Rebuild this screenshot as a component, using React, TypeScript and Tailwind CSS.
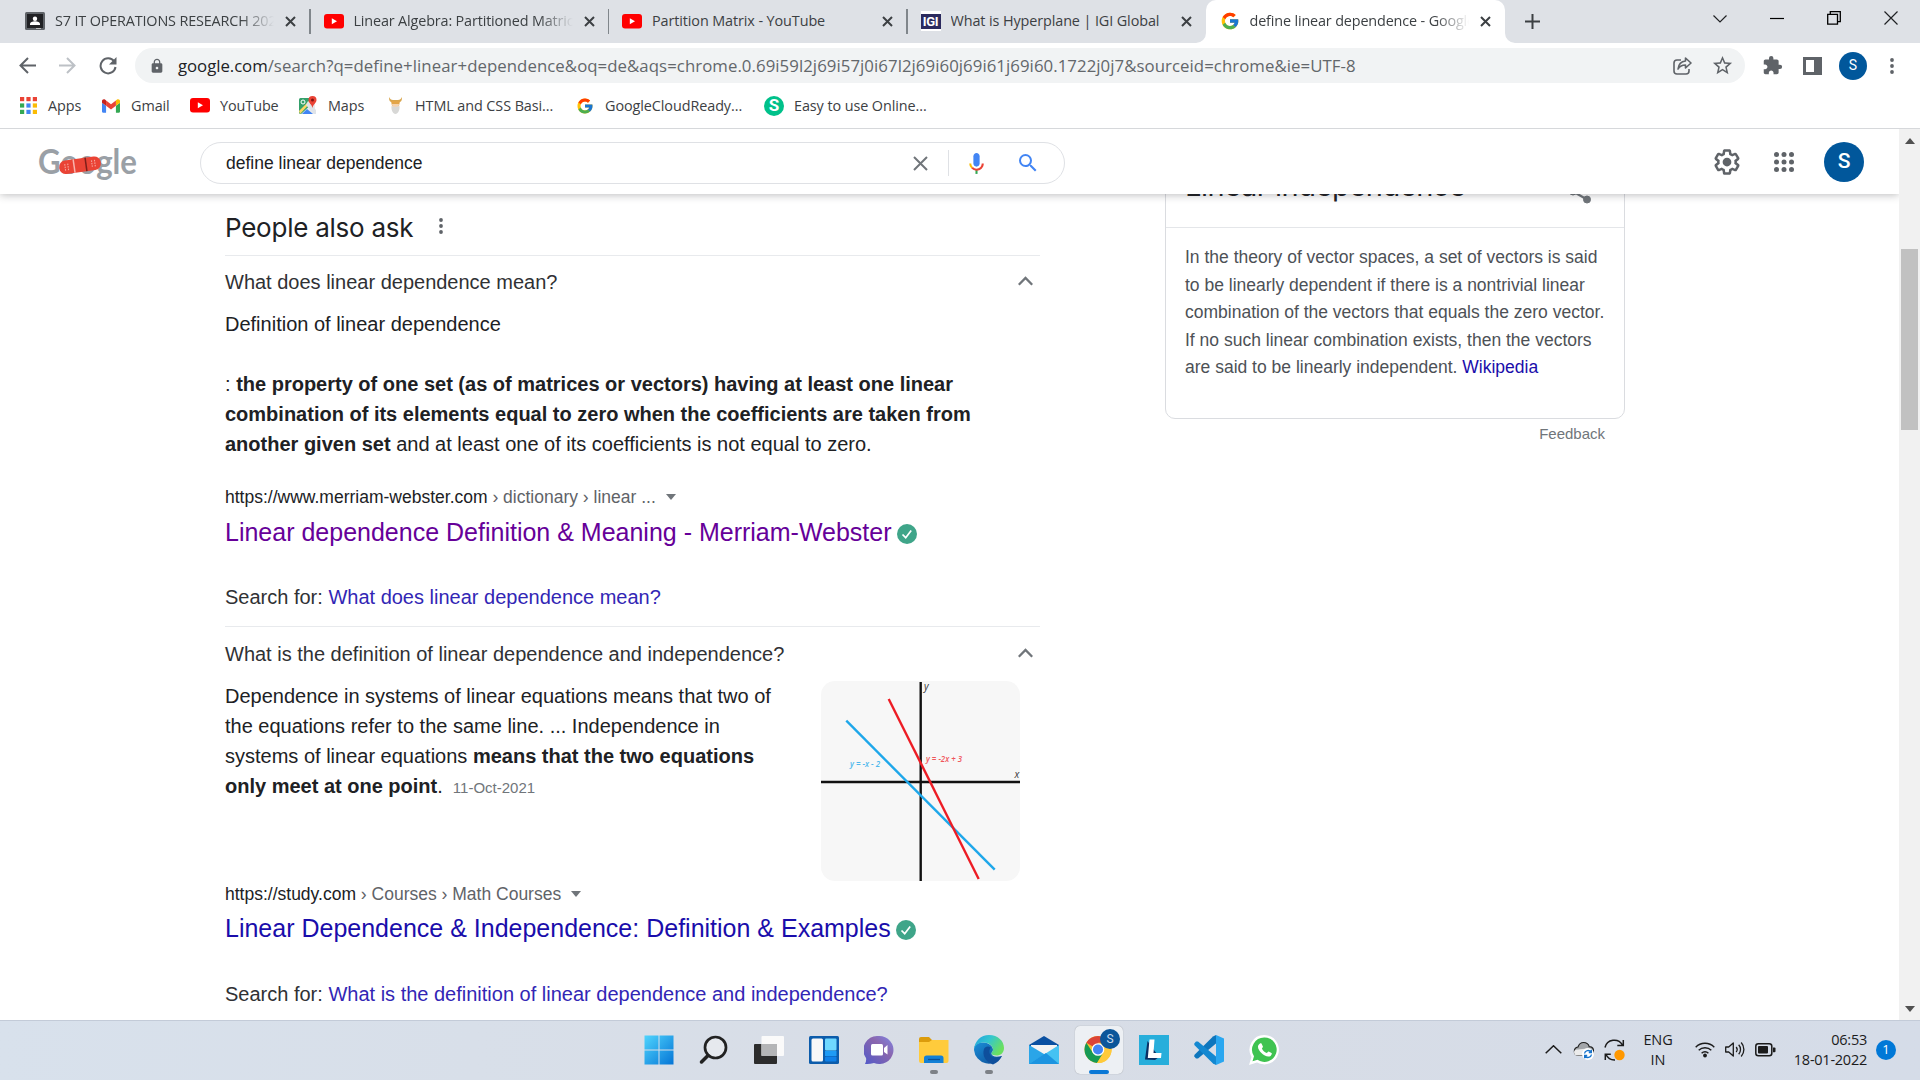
import type { ReactNode } from "react";
import { FcGoogle } from "react-icons/fc";
import { MdExtension, MdLock, MdStarBorder } from "react-icons/md";

const UI = "font-['Open_Sans','Noto_Sans',sans-serif]";
const ARIAL = "font-['Liberation_Sans',Arial,sans-serif]";

/* ---------- small icons ---------- */

function YouTubeIcon() {
  return (
    <svg className="h-[15px] w-5 shrink-0" viewBox="0 0 20 15">
      <rect width="20" height="14.5" rx="3" fill="#f00" />
      <path d="M7.8 4.2v6l5.2-3z" fill="#fff" />
    </svg>
  );
}

function ClassroomIcon() {
  return (
    <svg className="h-[18px] w-5 shrink-0" viewBox="0 0 20 18">
      <rect width="20" height="18" rx="1.5" fill="#5f6368" />
      <rect x="2" y="2" width="16" height="14" fill="#202124" />
      <circle cx="10" cy="6.8" r="2.2" fill="#fff" />
      <path d="M5 13v-1.2c0-1.6 2.4-2.5 5-2.5s5 .9 5 2.5V13z" fill="#fff" />
      <path d="M11 16h5v1h-5z" fill="#bbb" />
    </svg>
  );
}

function IgiIcon() {
  return (
    <span className="flex h-5 w-5 shrink-0 items-center bg-white">
      <span className="flex h-[15px] w-5 items-center justify-center bg-[#2b2a5e] font-['Roboto',sans-serif] text-[13px] font-bold leading-none tracking-tight text-white">
        IGI
      </span>
    </span>
  );
}

function CloseIcon() {
  return (
    <svg className="h-[11px] w-[11px] shrink-0" viewBox="0 0 11 11" stroke="#3c4043" strokeWidth="2">
      <path d="M1 1l9 9M10 1l-9 9" />
    </svg>
  );
}

function GmailIcon() {
  return (
    <svg className="h-[14px] w-[18px]" viewBox="52 42 88 66">
      <path fill="#4285f4" d="M58 108h14V74L52 59v43c0 3.32 2.69 6 6 6" />
      <path fill="#34a853" d="M120 108h14c3.32 0 6-2.69 6-6V59l-20 15" />
      <path fill="#fbbc04" d="M120 48v26l20-15v-8c0-7.42-8.47-11.65-14.4-7.2" />
      <path fill="#ea4335" d="M72 74V48l24 18 24-18v26L96 92" />
      <path fill="#c5221f" d="M52 51v8l20 15V48l-5.6-4.2c-5.94-4.45-14.4-.22-14.4 7.2" />
    </svg>
  );
}

function MapsIcon() {
  return (
    <svg className="h-[19px] w-[19px]" viewBox="0 0 19 19">
      <rect x="0" y="2" width="16" height="16" rx="1.5" fill="#34a06a" />
      <path d="M2 18L16 5v13z" fill="#e8eaed" />
      <path d="M3 18l5-5 6 5z" fill="#4285f4" />
      <path d="M0 15L12 3l2 1L1 18z" fill="#fdd663" />
      <path d="M9 5l8 9v4h-2L7 9z" fill="#dfe3e8" />
      <circle cx="4" cy="6" r="2" fill="none" stroke="#fff" strokeWidth="1" />
      <path d="M13.5 0a4 4 0 0 0-4 4c0 3 3.3 4 4 8 .7-4 4-5 4-8a4 4 0 0 0-4-4z" fill="#ea4335" />
      <circle cx="13.5" cy="4" r="1.5" fill="#811411" />
    </svg>
  );
}

function VikingIcon() {
  return (
    <svg className="h-[19px] w-[15px]" viewBox="0 0 15 19">
      <path d="M1 1c0 4 1 5 3 5l7 0c2 0 3-1 3-5-1 2-2 3-4 3H5C3 4 2 3 1 1z" fill="#d9a54c" />
      <path d="M3 5h9l-1 5H4z" fill="#e3a548" />
      <path d="M4 8h7l-.5 4h-6z" fill="#f3d2b0" />
      <path d="M3.5 10l4 1 4-1c.5 4-1.5 8-4 8s-4.5-4-4-8z" fill="#d8d8d6" />
    </svg>
  );
}

function AppsIcon() {
  const colors = ["#ea4335", "#ea4335", "#ea4335", "#34a853", "#4285f4", "#fbbc04", "#34a853", "#4285f4", "#fbbc04"];
  return (
    <svg className="h-[17px] w-[17px]" viewBox="0 0 17 17">
      {colors.map((c, i) => (
        <rect key={i} x={(i % 3) * 6.4} y={Math.floor(i / 3) * 6.4} width="4.2" height="4.2" fill={c} />
      ))}
    </svg>
  );
}

/* ---------- browser chrome ---------- */

function Tab({ icon, title, active, fade }: { icon: ReactNode; title: string; active?: boolean; fade?: boolean }) {
  return (
    <div
      className={
        active
          ? "relative flex h-[43px] w-[299px] shrink-0 items-center rounded-t-[10px] bg-white pb-px pl-[14px] pr-[14px]"
          : "relative flex h-[43px] w-[299px] shrink-0 items-center pb-px pl-[14px] pr-[14px]"
      }
    >
      {active && (
        <>
          <svg className="absolute -left-[10px] bottom-0 h-[10px] w-[10px]" viewBox="0 0 10 10">
            <path d="M10 0v10H0A10 10 0 0 0 10 0z" fill="#fff" />
          </svg>
          <svg className="absolute -right-[10px] bottom-0 h-[10px] w-[10px]" viewBox="0 0 10 10">
            <path d="M0 0v10h10A10 10 0 0 1 0 0z" fill="#fff" />
          </svg>
        </>
      )}
      {icon}
      <span
        className={
          fade
            ? "ml-[10px] w-[219px] overflow-hidden whitespace-nowrap pb-px text-[14.4px] tracking-[-0.15px] text-[#3c4043] [mask-image:linear-gradient(to_right,black_185px,transparent_219px)]"
            : "ml-[10px] w-[219px] overflow-hidden whitespace-nowrap pb-px text-[14.4px] tracking-[-0.1px] text-[#3c4043]"
        }
      >
        {title}
      </span>
      <span className="ml-auto flex">
        <CloseIcon />
      </span>
    </div>
  );
}

function TabStrip() {
  return (
    <div className="flex h-[43px] items-center bg-[#dee1e6]">
      <div className="w-[11px]" />
      <Tab icon={<ClassroomIcon />} title="S7 IT OPERATIONS RESEARCH 2021" fade />
      <div className="-mx-px h-[25px] w-[1.5px] bg-[#80868b]" />
      <Tab icon={<YouTubeIcon />} title="Linear Algebra: Partitioned Matrices" fade />
      <div className="-mx-px h-[25px] w-[1.5px] bg-[#80868b]" />
      <Tab icon={<YouTubeIcon />} title="Partition Matrix - YouTube" />
      <div className="-mx-px h-[25px] w-[1.5px] bg-[#80868b]" />
      <Tab icon={<IgiIcon />} title="What is Hyperplane | IGI Global" />
      <Tab icon={<FcGoogle className="h-5 w-5 shrink-0" />} title="define linear dependence - Google Search" active fade />
      <svg className="ml-[20px] h-[15px] w-[15px]" viewBox="0 0 15 15" stroke="#3c4043" strokeWidth="2">
        <path d="M7.5 0v15M0 7.5h15" />
      </svg>
      <div className="ml-auto flex h-full items-start gap-[43px] pr-[22px] pt-[11px]">
        <svg className="mt-[4px] h-2 w-[14px]" viewBox="0 0 14 8" fill="none" stroke="#202124" strokeWidth="1.2">
          <path d="M.5.5L7 7l6.5-6.5" />
        </svg>
        <svg className="h-[15px] w-[14px]" viewBox="0 0 14 15" stroke="#000" strokeWidth="1.2">
          <path d="M0 7.5h14" />
        </svg>
        <svg className="h-[14px] w-[14px]" viewBox="0 0 14 14" fill="none" stroke="#000" strokeWidth="1.3">
          <path d="M.7 3.3h9.8v9.8H.7zM3.3 3.300V.7h10v10h-2.800" />
        </svg>
        <svg className="h-[14px] w-[14px]" viewBox="0 0 14 14" stroke="#202124" strokeWidth="1.2">
          <path d="M.5.5l13 13M13.5.5l-13 13" />
        </svg>
      </div>
    </div>
  );
}

function Toolbar() {
  return (
    <div className="flex h-[45px] items-center bg-white pl-[19px] pr-[20px]">
      <svg className="h-[17px] w-[17px]" viewBox="0 0 17 17" fill="none" stroke="#5f6368" strokeWidth="2">
        <path d="M17 8.5H2M9 1L1.5 8.500 9 16" />
      </svg>
      <svg className="ml-[23px] h-[17px] w-[17px]" viewBox="0 0 17 17" fill="none" stroke="#bdc1c6" strokeWidth="2">
        <path d="M0 8.500h15M8 1l7.500 7.500L8 16" />
      </svg>
      <svg className="ml-[23px] h-[18px] w-[18px]" viewBox="0 0 18 18" fill="none" stroke="#5f6368" strokeWidth="2">
        <path d="M15.200 4.500A7.500 7.500 0 1 0 16.500 10" />
        <path d="M17.500 0v7.500H10z" fill="#5f6368" stroke="none" />
      </svg>
      <div className="ml-[18px] flex h-[35px] w-[1610px] items-center rounded-full bg-[#f1f3f4] pl-[14px] pr-[11px]">
        <MdLock className="h-4 w-4 text-[#5f6368]" />
        <span className="ml-[13px] whitespace-nowrap text-[16.8px] tracking-[0.06px] text-[#63676b]">
          <span className="tracking-[-0.05px] text-[#202124]">google.com</span>
          /search?q=define+linear+dependence&amp;oq=de&amp;aqs=chrome.0.69i59l2j69i57j0i67l2j69i60j69i61j69i60.1722j0j7&amp;sourceid=chrome&amp;ie=UTF-8
        </span>
        <svg className="ml-auto h-[18px] w-[19px]" viewBox="0 0 19 18" fill="none" stroke="#5f6368" strokeWidth="1.6" strokeLinejoin="round">
          <path d="M8 3H4a3 3 0 0 0-3 3v8a3 3 0 0 0 3 3h9a3 3 0 0 0 3-3v-2" />
          <path d="M12.5 1L18 6l-5.5 5V8c-4 0-6 1.5-7.5 4 .5-4.500 3-7.500 7.500-8z" />
        </svg>
        <MdStarBorder className="ml-[19px] h-[23px] w-[23px] text-[#5f6368]" />
      </div>
      <MdExtension className="ml-[17px] h-[21px] w-[21px] text-[#5f6368]" />
      <svg className="ml-[20px] h-[18px] w-[19px]" viewBox="0 0 19 18">
        <rect width="19" height="18" fill="#5f6368" />
        <rect x="3" y="3" width="8" height="12" fill="#fff" />
      </svg>
      <span className="ml-[17px] flex h-7 w-7 items-center justify-center rounded-full bg-[#01579b] font-['Roboto',sans-serif] text-[14px] text-white">
        S
      </span>
      <svg className="ml-auto h-4 w-4" viewBox="0 0 16 16" fill="#5f6368">
        <circle cx="8" cy="2" r="1.9" />
        <circle cx="8" cy="8" r="1.9" />
        <circle cx="8" cy="14" r="1.9" />
      </svg>
    </div>
  );
}

function Bookmark({ icon, label, className }: { icon: ReactNode; label: string; className: string }) {
  return (
    <div className={`flex shrink-0 items-center whitespace-nowrap ${className}`}>
      <span className="flex w-5 shrink-0 justify-center">{icon}</span>
      <span className="ml-[10px]">{label}</span>
    </div>
  );
}

function BookmarksBar() {
  return (
    <div className="flex h-[41px] items-center border-b border-[#d6d8db] bg-white pb-[4px] pl-[18px] text-[14.4px] tracking-[-0.08px] text-[#3c4043]">
      <Bookmark className="w-[83px]" icon={<AppsIcon />} label="Apps" />
      <Bookmark className="w-[89px]" icon={<GmailIcon />} label="Gmail" />
      <Bookmark className="w-[108px]" icon={<YouTubeIcon />} label="YouTube" />
      <Bookmark className="w-[87px]" icon={<MapsIcon />} label="Maps" />
      <Bookmark className="w-[190px]" icon={<VikingIcon />} label="HTML and CSS Basi..." />
      <Bookmark className="w-[189px]" icon={<FcGoogle className="h-[18px] w-[18px]" />} label="GoogleCloudReady..." />
      <Bookmark
        className="w-[180px]"
        icon={
          <span className="flex h-5 w-5 items-center justify-center rounded-full bg-[#00c18a] font-['Roboto',sans-serif] text-[17px] font-bold leading-none text-white">
            S
          </span>
        }
        label="Easy to use Online..."
      />
    </div>
  );
}

/* ---------- search page ---------- */

function Logo() {
  return (
    <svg className="mt-[4px] h-[40px] w-[102px] shrink-0" viewBox="0 0 102 40">
      <text
        x="1"
        y="30"
        fontFamily="Lato, sans-serif"
        fontSize="34"
        fontWeight="700"
        fill="#9aa0a6"
        textLength="99"
        lengthAdjust="spacingAndGlyphs"
      >
        Google
      </text>
      <g transform="rotate(-8 43 21)">
        <rect x="22" y="14.5" width="42" height="13.5" rx="6.5" fill="#ea4335" />
        <path d="M37 14.5v13.5" stroke="#f8b4ae" strokeWidth="1.5" />
        <path d="M49 14.5v13.5" stroke="#7d1f1a" strokeWidth="1.5" />
        <path d="M28 18v7M31 18v7M55 18v7M58 18v7" stroke="#f6a59d" strokeWidth="1.1" strokeDasharray="1.5 1" />
      </g>
    </svg>
  );
}

function SearchHeader() {
  return (
    <header className="relative z-10 flex h-[65px] items-center bg-white pl-[37px] pr-[35px] shadow-[0_1px_8px_rgba(32,33,36,0.3)]">
      <Logo />
      <div className="ml-[61px] mt-[3px] flex h-[42px] w-[865px] items-center rounded-full border border-[#dfe1e5] pl-[25px] pr-[24px]">
        <span className={`${ARIAL} text-[17.5px] text-[#202124]`}>define linear dependence</span>
        <svg className="ml-auto h-[15px] w-[15px]" viewBox="0 0 15 15" stroke="#70757a" strokeWidth="2">
          <path d="M1 1l13 13M14 1L1 14" />
        </svg>
        <span className="ml-[20px] h-[26px] w-px bg-[#dfe1e5]" />
        <svg className="ml-[15px] h-[25px] w-[25px]" viewBox="0 0 24 24">
          <path fill="#4285f4" d="M12 15c1.66 0 3-1.31 3-2.97V5c0-1.66-1.34-3-3-3S9 3.340 9 5v7.030C9 13.690 10.340 15 12 15z" />
          <path fill="#34a853" d="M11 18.080h2V22h-2z" />
          <path fill="#fbbc05" d="M7.050 16.870A6.900 6.900 0 0 1 5 12h2c0 1.450.56 2.420 1.470 3.380z" />
          <path fill="#ea4335" d="M12 16.930a4.970 4.970 0 0 1-3.540-1.550l-1.410 1.490A7 7 0 0 0 12 18.930c3.870 0 6.990-2.920 6.990-6.930h-2c0 2.920-2.240 4.930-4.990 4.930z" />
        </svg>
        <svg className="ml-[27px] h-[24px] w-[24px]" viewBox="0 0 24 24" fill="#4285f4">
          <path d="M15.500 14h-.79l-.28-.27A6.471 6.471 0 0 0 16 9.500 6.500 6.500 0 1 0 9.500 16c1.610 0 3.090-.59 4.230-1.570l.27.28v.79l5 4.990L20.490 19l-4.990-5zm-6 0C7.010 14 5 11.990 5 9.500S7.010 5 9.500 5 14 7.010 14 9.500 11.990 14 9.500 14z" />
        </svg>
      </div>
      <div className="ml-auto flex items-center">
        <svg className="h-[30px] w-[30px]" viewBox="0 0 24 24" fill="#5f6368">
          <path d="M13.850 22.250h-3.700c-.74 0-1.360-.54-1.450-1.270l-.27-1.890c-.27-.14-.53-.29-.79-.46l-1.800.72c-.7.26-1.470-.03-1.810-.65L2.200 15.530c-.35-.66-.2-1.440.36-1.880l1.530-1.190c-.01-.15-.02-.3-.02-.46 0-.15.01-.31.02-.46l-1.520-1.190c-.59-.45-.74-1.260-.37-1.880l1.850-3.190c.34-.62 1.110-.9 1.790-.63l1.810.73c.26-.17.52-.32.78-.46l.27-1.910c.09-.7.71-1.250 1.440-1.250h3.700c.74 0 1.360.54 1.450 1.270l.27 1.890c.27.14.53.29.79.46l1.800-.72c.71-.26 1.480.03 1.820.65l1.840 3.180c.36.66.2 1.440-.36 1.880l-1.520 1.190c.01.15.02.3.02.46s-.01.31-.02.46l1.520 1.190c.56.45.72 1.230.37 1.860l-1.860 3.220c-.34.62-1.110.9-1.800.63l-1.800-.72c-.26.17-.52.32-.78.46l-.27 1.910c-.1.68-.72 1.220-1.460 1.220zm-3.230-2h2.760l.37-2.550.53-.22c.44-.18.88-.44 1.340-.78l.45-.34 2.380.96 1.380-2.400-2.030-1.580.07-.56c.03-.26.06-.51.06-.78s-.03-.53-.06-.78l-.07-.56 2.030-1.580-1.390-2.400-2.390.96-.45-.35c-.42-.32-.87-.58-1.330-.77l-.52-.22-.37-2.550h-2.760l-.37 2.550-.53.21c-.44.19-.88.44-1.340.79l-.45.33-2.380-.95-1.390 2.390 2.030 1.580-.07.56a7 7 0 0 0-.06.79c0 .26.02.53.06.78l.07.56-2.030 1.580 1.380 2.400 2.390-.96.45.35c.43.33.86.58 1.330.77l.53.22z" />
          <circle cx="12" cy="12" r="3.5" />
        </svg>
        <svg className="ml-[27px] h-[30px] w-[30px]" viewBox="0 0 24 24" fill="#5f6368">
          {[6, 12, 18].map((cy) => [6, 12, 18].map((cx) => <circle key={`${cx}-${cy}`} cx={cx} cy={cy} r="2" />))}
        </svg>
        <span className="ml-[25px] flex h-10 w-10 items-center justify-center rounded-full bg-[#01579b] font-['Roboto',sans-serif] text-[21px] font-medium text-white">
          S
        </span>
      </div>
    </header>
  );
}

function Question({ text, className }: { text: string; className: string }) {
  return (
    <div className={`flex items-center justify-between border-t border-[#e8eaed] pr-[7px] ${className}`}>
      <span className="text-[20px] text-[#303134]">{text}</span>
      <svg className="mb-[2px] h-[10px] w-[15px]" viewBox="0 0 15 10" fill="none" stroke="#70757a" strokeWidth="2.3">
        <path d="M.8 8.800L7.500 2l6.700 6.800" />
      </svg>
    </div>
  );
}

function Result({
  domain,
  crumbs,
  title,
  titleClass,
  query,
  className,
  gapClass,
}: {
  domain: string;
  crumbs: string;
  title: string;
  titleClass: string;
  query: string;
  className: string;
  gapClass: string;
}) {
  return (
    <div className={className}>
      <div className="flex h-6 items-center whitespace-pre text-[17.5px] text-[#5f6368]">
        <span className="text-[#202124]">{domain}</span>
        <span>{crumbs}</span>
        <span className="ml-[10px] border-x-[5px] border-t-[6px] border-x-transparent border-t-[#70757a]" />
      </div>
      <div className={`flex h-9 items-center ${gapClass}`}>
        <a className={`whitespace-nowrap text-[25px] ${titleClass}`}>{title}</a>
        <svg className="ml-[5px] mt-[2px] h-5 w-5" viewBox="0 0 20 20">
          <circle cx="10" cy="10" r="10" fill="#3fa589" />
          <path d="M5.5 10.5l3.2 3.2L14.2 6.5" fill="none" stroke="#fff" strokeWidth="1.7" />
        </svg>
      </div>
      <div className="h-[30px] whitespace-nowrap text-[20px] leading-[30px] text-[#303134]">
        Search for: <a className="text-[#3226b5]">{query}</a>
      </div>
    </div>
  );
}

function Plot() {
  return (
    <svg className="h-[200px] w-[199px] shrink-0 rounded-[14px] bg-[#f7f7f7]" viewBox="0 0 199 200" fontFamily="Open Sans, sans-serif" fontStyle="italic">
      <path d="M99.7 1v199M0 101h199" stroke="#111" strokeWidth="2.4" />
      <path d="M25.3 39.7L173.7 188.7" stroke="#1ea7ea" strokeWidth="2.4" />
      <path d="M67.7 18l90 180" stroke="#ed1c24" strokeWidth="2.4" />
      <text x="29" y="86" fontSize="8.5" fontWeight="600" fill="#4fb8ec" textLength="30" lengthAdjust="spacingAndGlyphs">y = -x - 2</text>
      <text x="105" y="81" fontSize="8.5" fontWeight="600" fill="#f0565c" textLength="36" lengthAdjust="spacingAndGlyphs">y = -2x + 3</text>
      <text x="103" y="8.500" fontSize="10" fill="#333">y</text>
      <text x="193.5" y="97" fontSize="10" fill="#333">x</text>
    </svg>
  );
}

function PeopleAlsoAsk() {
  return (
    <section className={`${ARIAL} w-[815px] shrink-0 text-[#202124]`}>
      <div className="flex h-[61px] items-center pt-[5px]">
        <h2 className="w-[188px] whitespace-nowrap font-['Inter',sans-serif] text-[26px] tracking-[-0.25px]">People also ask</h2>
        <svg className="ml-[26px] mt-[-3px] h-4 w-1" viewBox="0 0 4 16" fill="#5f6368">
          <circle cx="2" cy="2" r="1.9" />
          <circle cx="2" cy="8" r="1.9" />
          <circle cx="2" cy="14" r="1.9" />
        </svg>
      </div>
      <Question className="h-[54px] pb-[2px]" text="What does linear dependence mean?" />
      <div className="text-[20px] leading-[30px]">
        <p>Definition of linear dependence</p>
        <p className="mt-[30px] whitespace-nowrap">
          : <b>the property of one set (as of matrices or vectors) having at least one linear</b>
          <br />
          <b>combination of its elements equal to zero when the coefficients are taken from</b>
          <br />
          <b>another given set</b> and at least one of its coefficients is not equal to zero.
        </p>
      </div>
      <Result
        className="mt-[26px] mb-[14px]"
        gapClass="mt-[6px] mb-[31px]"
        domain="https://www.merriam-webster.com"
        crumbs=" › dictionary › linear ..."
        title="Linear dependence Definition & Meaning - Merriam-Webster"
        titleClass="text-[#660099]"
        query="What does linear dependence mean?"
      />
      <Question className="h-[55px]" text="What is the definition of linear dependence and independence?" />
      <div className="flex justify-between pr-5">
        <p className="whitespace-nowrap text-[20px] leading-[30px]">
          Dependence in systems of linear equations means that two of
          <br />
          the equations refer to the same line. ... Independence in
          <br />
          systems of linear equations <b>means that the two equations</b>
          <br />
          <b>only meet at one point</b>.<span className="ml-[10px] text-[15px] text-[#70757a]">11-Oct-2021</span>
        </p>
        <Plot />
      </div>
      <Result
        className="mt-[1px]"
        gapClass="mt-[5px] mb-[32px]"
        domain="https://study.com"
        crumbs=" › Courses › Math Courses"
        title="Linear Dependence & Independence: Definition & Examples"
        titleClass="text-[#1a0dab]"
        query="What is the definition of linear dependence and independence?"
      />
    </section>
  );
}

function KnowledgePanel() {
  return (
    <aside className={`${ARIAL} -mt-[54px] ml-[125px] w-[460px]`}>
      <div className="rounded-[10px] border border-[#dadce0]">
        <div className="flex h-[87px] items-start justify-between border-b border-[#e4e6e9] pl-[19px] pr-[33px]">
          <h2 className="mt-[26px] whitespace-nowrap font-['Inter',sans-serif] text-[29px] leading-[38px] tracking-[-0.45px] text-[#202124]">
            Linear independence
          </h2>
          <svg className="mt-[38px] h-[25px] w-[22px]" viewBox="0 0 22 25" fill="#70757a" stroke="#70757a">
            <path d="M18 4.500L4 12.500l14 8" fill="none" strokeWidth="2.2" />
            <circle cx="18" cy="4.500" r="3.500" />
            <circle cx="4" cy="12.500" r="3.500" />
            <circle cx="18" cy="20.500" r="3.500" />
          </svg>
        </div>
        <p className="h-[190px] whitespace-nowrap pl-[19px] pt-[16px] text-[17.5px] leading-[27.5px] text-[#4d5156]">
          In the theory of vector spaces, a set of vectors is said
          <br />
          to be linearly dependent if there is a nontrivial linear
          <br />
          combination of the vectors that equals the zero vector.
          <br />
          If no such linear combination exists, then the vectors
          <br />
          are said to be linearly independent. <a className="text-[#1a0dab]">Wikipedia</a>
        </p>
      </div>
      <div className="mt-[5px] pr-5 text-right text-[15px] leading-5 text-[#70757a]">Feedback</div>
    </aside>
  );
}

function Scrollbar() {
  return (
    <div className="flex w-[21px] shrink-0 flex-col items-center bg-[#f1f1f1] pb-[8px] pt-[9px]">
      <span className="border-x-[5px] border-b-[6px] border-x-transparent border-b-[#505050]" />
      <span className="mt-[105px] h-[181px] w-[17px] bg-[#c1c1c1]" />
      <span className="mt-auto border-x-[5px] border-t-[6px] border-x-transparent border-t-[#505050]" />
    </div>
  );
}

/* ---------- taskbar ---------- */

const taskIcons: { name: string; art: ReactNode; dot?: boolean; current?: boolean }[] = [
  {
    name: "start",
    art: (
      <>
        <defs>
          <linearGradient id="win" x1="0" y1="0" x2="1" y2="1">
            <stop offset="0" stopColor="#4fd4fd" />
            <stop offset="1" stopColor="#0575d6" />
          </linearGradient>
        </defs>
        <path fill="url(#win)" d="M.5.5h14v14H.5zM15.500.5h14v14h-14zM.5 15.500h14v14H.5zM15.500 15.500h14v14h-14z" />
      </>
    ),
  },
  {
    name: "search",
    art: (
      <g fill="none" stroke="#222" strokeLinecap="round">
        <circle cx="16.500" cy="12.500" r="10.500" strokeWidth="2.700" fill="#e6e9ee" />
        <path d="M9 20.500L2.500 27" strokeWidth="3.500" />
      </g>
    ),
  },
  {
    name: "task view",
    art: (
      <>
        <rect x="0" y="9" width="23" height="20" rx="1" fill="#2c2c2c" />
        <rect x="7.5" y="1" width="22.5" height="20" rx="1" fill="#fafafa" />
        <rect x="7.5" y="9" width="15.5" height="12" fill="#b4b5b7" />
      </>
    ),
  },
  {
    name: "widgets",
    art: (
      <>
        <rect x="0" y="1" width="30" height="28" rx="1.5" fill="#0c5cab" />
        <rect x="2.5" y="3.5" width="11.5" height="23" rx="1.5" fill="#f7f7f7" />
        <rect x="16" y="3.5" width="11.5" height="12" rx="1" fill="#6fd8ff" />
        <rect x="16" y="16" width="11.5" height="5" fill="#1e9bf5" />
        <rect x="16" y="21.5" width="11.5" height="5" rx="1" fill="#0f80e8" />
      </>
    ),
  },
  {
    name: "chat",
    art: (
      <>
        <defs>
          <linearGradient id="chat" x1="1" y1="0" x2="0" y2="1">
            <stop offset="0" stopColor="#7f86e6" />
            <stop offset=".4" stopColor="#8a66ae" />
            <stop offset="1" stopColor="#5059c9" />
          </linearGradient>
        </defs>
        <path fill="url(#chat)" d="M15 1a14.200 14 0 1 1-5 27c-3 1-6 1.200-9 1 1-2 1.500-4 1-6A14 14 0 0 1 15 1z" />
        <rect x="7" y="9" width="12" height="11.5" rx="1.5" fill="#fff" />
        <path d="M20 13l3.500-3v9.500L20 17z" fill="#fff" />
      </>
    ),
  },
  {
    name: "explorer",
    dot: true,
    art: (
      <>
        <path d="M0 4a2 2 0 0 1 2-2h8l3 3h15v5H0z" fill="#dc9c0c" />
        <path d="M0 7h10l3-2h16.500v21a2 2 0 0 1-2 2H2a2 2 0 0 1-2-2z" fill="#ffcb3c" />
        <path d="M5 28v-5a2.500 2.500 0 0 1 2.500-2.500h14.500a2.500 2.500 0 0 1 2.500 2.500v5z" fill="#1380d6" />
        <path d="M9 24.500h12" stroke="#0b4f96" strokeWidth="1.3" />
      </>
    ),
  },
  {
    name: "edge",
    dot: true,
    art: (
      <>
        <defs>
          <linearGradient id="edgeTop" x1="0" y1="0" x2="1" y2=".5">
            <stop offset="0" stopColor="#1f9fe0" />
            <stop offset=".5" stopColor="#34c6cf" />
            <stop offset="1" stopColor="#6be05f" />
          </linearGradient>
          <linearGradient id="edgeLow" x1="0" y1="0" x2="1" y2="1">
            <stop offset="0" stopColor="#1b8fd8" />
            <stop offset="1" stopColor="#0c4a94" />
          </linearGradient>
        </defs>
        <path fill="url(#edgeLow)" d="M0 15C0 9 5 7 9.500 7.500 15 8 19 11 19 15c0 1.500-1.500 2-1.500 3.500 0 3 4 4 10.500 2.500A15 15 0 0 1 0 15z" />
        <path fill="#0e4f9c" d="M10 14c-2 6 1 13 9 15.500 4-1.500 7-4.500 9-8.500-5 3-10.500 2-12-1.500-1-2.500-1-4.500 1-7-3-2-6-1-7 1.500z" />
        <path fill="url(#edgeTop)" d="M0 14.500C.5 6 7 0 15 0c9 0 15 6 15 13 0 5-3.500 7.500-7.500 7.500-3 0-5-1-5-2.300 0-1 1.500-1.600 1.500-3.700 0-3.500-4-7-9.500-7C5 7.500 1 10 0 14.500z" />
      </>
    ),
  },
  {
    name: "mail",
    art: (
      <>
        <path d="M0 10l15-9 15 9v3H0z" fill="#0a50a1" />
        <path d="M2 10h26v10H2z" fill="#f3f3f3" />
        <path d="M0 10l15 9v10H0z" fill="#2aa5e8" />
        <path d="M30 10L0 29h30z" fill="#45c2f2" />
        <path d="M13 20.500L0 29h30L17 18z" fill="#1c94e0" />
      </>
    ),
  },
  {
    name: "chrome",
    current: true,
    art: (
      <>
        <circle cx="14.500" cy="15" r="14" fill="#fbc02d" />
        <path d="M14.500 15L2.400 8A14 14 0 0 1 26.600 8z" fill="#db4437" />
        <path d="M2.400 8A14 14 0 0 0 13.500 29L20 18H9z" fill="#169a55" />
        <path d="M14.500 8h12.100A14 14 0 0 1 13.500 29l7-11z" fill="#ffca3a" />
        <circle cx="14.500" cy="15" r="6.500" fill="#fff" />
        <circle cx="14.500" cy="15" r="5.200" fill="#4285f4" />
      </>
    ),
  },
  {
    name: "notes",
    art: (
      <>
        <rect width="30" height="30" fill="#27aedb" />
        <path d="M8.500 6L6 24.500l10 .5 4-3z" fill="#0b2f63" />
        <path d="M10.500 4.500h5L14.500 18h8l-.5 5H8.800z" fill="#fff" />
      </>
    ),
  },
  {
    name: "editor",
    art: (
      <>
        <path d="M22 0l8 3.500v23L22 30z" fill="#2aa7f0" />
        <path d="M22 0v8.500L4 23.500 2 23.500.3 21.500V20L19 1.500z" fill="#0e76bd" />
        <path d="M22 30v-8.500L4 6.500H2L.3 8.500V10L19 28.500z" fill="#1388d1" />
      </>
    ),
  },
  {
    name: "whatsapp",
    art: (
      <>
        <path d="M15.500 0A14.700 14.700 0 1 1 8 27.500L0 30l2.500-8A14.700 14.700 0 0 1 15.500 0z" fill="#fff" />
        <path d="M15.500 2.500a12.200 12.200 0 1 1-7 22.200L3.500 26.300 5 21.300A12.200 12.200 0 0 1 15.500 2.500z" fill="#3fc351" />
        <path
          d="M11 8.500c.5-.3 1.300-.3 1.600.3l1.300 2.800c.2.500-.9 1.600-1 2 .9 2 2.600 3.600 4.800 4.500.5 0 1.400-1.800 2-1.600l2.800 1.400c.8.500 0 2.300-.9 3-2.600 1.700-6.600-.4-8.900-2.600-2.300-2.300-3.900-4.700-3.700-7 .1-1.200 1.200-2.300 2-2.800z"
          fill="#fff"
        />
      </>
    ),
  },
];

function TaskbarApps() {
  return (
    <div className="ml-[631px] flex h-full items-center">
      {taskIcons.map((t) => (
        <div key={t.name} className="relative flex h-full w-[55px] items-center justify-center">
          {t.current ? (
            <>
              <div className="flex h-12 w-12 items-center justify-center rounded-[5px] bg-[#edf0f4] shadow-[0_0_1px_rgba(0,0,0,0.35)]">
                <svg className="h-[29px] w-[29px]" viewBox="0 0 30 30">
                  {t.art}
                </svg>
              </div>
              <span className="absolute left-[29px] top-[8px] flex h-5 w-5 items-center justify-center rounded-full bg-[#0b569a] font-['Roboto',sans-serif] text-[12px] text-[#c9dcee]">
                S
              </span>
              <span className="absolute bottom-[4px] h-[4px] w-5 rounded-full bg-[#0a78d6]" />
            </>
          ) : (
            <svg className="h-[30px] w-[30px]" viewBox="0 0 30 30">
              {t.art}
            </svg>
          )}
          {t.dot && <span className="absolute bottom-[4px] h-[4px] w-2 rounded-full bg-[#7d8187]" />}
        </div>
      ))}
    </div>
  );
}

function Tray() {
  return (
    <div className="ml-auto flex h-full items-center pr-[24px] text-[14.5px] text-[#1b1b1b]">
      <svg className="h-[9px] w-[17px]" viewBox="0 0 17 9" fill="none" stroke="#1b1b1b" strokeWidth="1.5">
        <path d="M.7 8.300L8.500.8l7.800 7.500" />
      </svg>
      <svg className="ml-[11px] h-[20px] w-[21px]" viewBox="0 0 21 20">
        <path d="M5 15.500a4.300 4.300 0 0 1 0-8.500C6 4 8 2.500 10.500 2.500c3 0 5 1.500 5.700 4.200 2.500 0 4.300 1.800 4.300 4.500s-1.800 4.300-4 4.300z" fill="#a3a6aa" stroke="#222" strokeWidth="1.2" />
        <path d="M1 12c0-2 2-2.500 4-2.500l9-1 4 1 2 3-3 3H4c-1.500 0-3-1-3-3.500z" fill="#ececec" />
        <circle cx="15" cy="14" r="6" fill="#fff" />
        <path d="M11.500 13.500a3.600 3.600 0 0 1 6.500-1.500M18.500 14.500A3.600 3.600 0 0 1 12 16M18.300 9.800V12.500h-2.500M11.700 18.200v-2.700h2.500" fill="none" stroke="#1673cc" strokeWidth="1.4" />
      </svg>
      <svg className="ml-[10px] h-[22px] w-[21px]" viewBox="0 0 21 22" fill="none" stroke="#1b1b1b" strokeWidth="1.5">
        <path d="M1 8.500A9.500 9.500 0 0 1 18.500 6M19.300 1v5.500h-6M11 21A9.500 9.500 0 0 1 2 15.500M1.300 21v-5.700h5.500" />
        <circle cx="15.500" cy="16" r="5.200" fill="#ff9800" stroke="none" />
      </svg>
      <div className="ml-[15px] w-[36px] text-center leading-5 tracking-[-0.1px]">
        <div>ENG</div>
        <div>IN</div>
      </div>
      <svg className="ml-[19px] h-[17px] w-[20px]" viewBox="0 0 20 17" fill="none" stroke="#1b1b1b" strokeWidth="1.4">
        <path d="M.7 6.200a13 13 0 0 1 18.600 0M3.700 9.300a9 9 0 0 1 12.600 0M6.600 12.200a4.800 4.800 0 0 1 6.800 0" />
        <circle cx="10" cy="14.500" r="1.900" fill="#1b1b1b" stroke="none" />
      </svg>
      <svg className="ml-[10px] h-[17px] w-[20px]" viewBox="0 0 20 17" fill="none" stroke="#1b1b1b" strokeWidth="1.3" strokeLinejoin="round">
        <path d="M.7 6v5h3l4.600 4V2L3.700 6zM11.200 6a4 4 0 0 1 0 5M13.700 3.800a7 7 0 0 1 0 9.400M16.200 1.500a10.500 10.500 0 0 1 0 14" />
      </svg>
      <svg className="ml-[10px] h-[14px] w-[21px]" viewBox="0 0 21 14">
        <rect x=".8" y=".8" width="16" height="12" rx="2.5" fill="none" stroke="#1b1b1b" strokeWidth="1.5" />
        <rect x="3" y="3" width="10" height="7.6" rx="1" fill="#1b1b1b" />
        <path d="M18 4.500h1.500a1 1 0 0 1 1 1v2.800a1 1 0 0 1-1 1H18z" fill="#1b1b1b" />
      </svg>
      <div className="ml-[9px] w-[82px] whitespace-nowrap text-right leading-5 tracking-[-0.25px]">
        <div>06:53</div>
        <div>18-01-2022</div>
      </div>
      <span className="ml-[9px] flex h-5 w-5 items-center justify-center rounded-full bg-[#0078d7] text-[13px] text-white">1</span>
    </div>
  );
}

export default function App() {
  return (
    <div className={`flex h-[1080px] w-[1920px] flex-col overflow-hidden bg-white ${UI}`}>
      <TabStrip />
      <Toolbar />
      <BookmarksBar />
      <div className="flex h-[891px] shrink-0">
        <div className="flex min-w-0 flex-1 flex-col overflow-hidden">
          <SearchHeader />
          <main className="flex min-h-0 flex-1 items-start pl-[225px]">
            <PeopleAlsoAsk />
            <KnowledgePanel />
          </main>
        </div>
        <Scrollbar />
      </div>
      <footer className="flex h-[60px] shrink-0 items-center border-t border-[#c3cbd8] bg-linear-to-r from-[#d8e1ec] via-[#d8dde6] to-[#d5dce8] pb-[2px]">
        <TaskbarApps />
        <Tray />
      </footer>
    </div>
  );
}
